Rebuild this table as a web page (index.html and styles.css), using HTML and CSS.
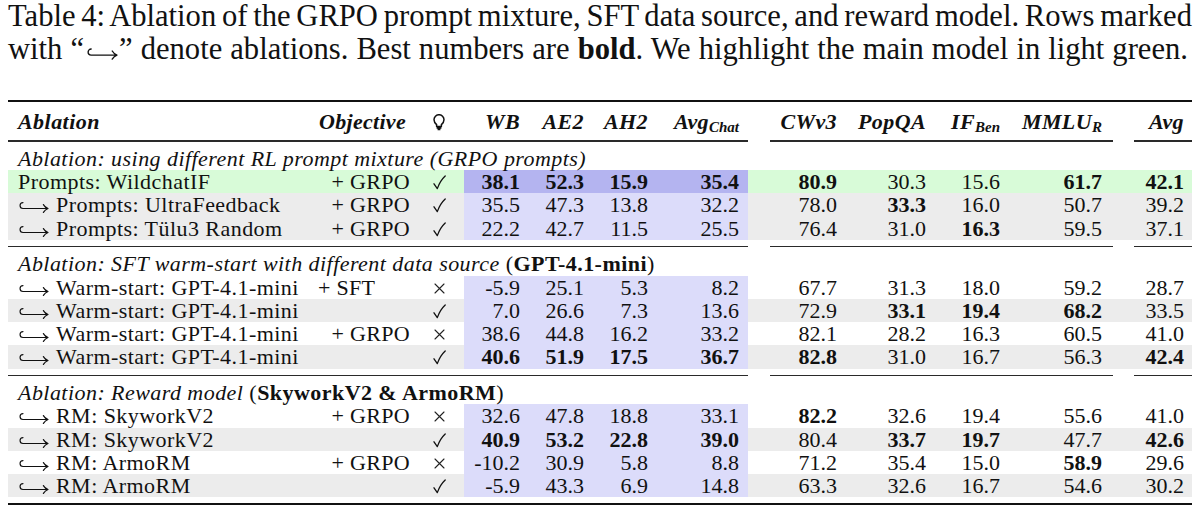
FILE: index.html
```html
<!DOCTYPE html>
<html lang="en">
<head>
<meta charset="utf-8">
<title>Table 4: Ablation</title>
<link rel="stylesheet" href="styles.css">
</head>
<body>
<div class="page">
  <p class="caption"><span class="cl1">Table 4: Ablation of the GRPO prompt mixture, SFT data source, and reward model. Rows marked</span><span class="cl2">with “<svg class="hook cap-hook" viewBox="0 0 31 13" aria-label="hookrightarrow"><path d="M5 2.6 A2.95 2.95 0 0 0 5 8.5 H29.6 M25.4 4.6 Q27 7.4 30 8.5 Q27 9.6 25.4 12.4"/></svg>” denote ablations. Best numbers are <b>bold</b>. We highlight the main model in light green.</span></p>

  <div class="tbl">
    <table>
      <colgroup>
        <col class="w1"><col class="w2"><col class="w3"><col class="w4"><col class="w5"><col class="w6"><col class="w7"><col class="w8"><col class="w9"><col class="w10"><col class="w11"><col class="w12">
      </colgroup>
      <thead>
        <tr class="head">
          <th class="c1">Ablation</th>
          <th class="c2">Objective</th>
          <th class="c3"><svg class="bulb" viewBox="0 0 12 17" aria-label="thinking"><path d="M3.6 10.6 C2.1 9.2 1 7.7 1 5.7 A5 5 0 0 1 11 5.7 C11 7.7 9.9 9.2 8.4 10.6 L8.4 12.4 L3.6 12.4 Z M3.6 14 H8.4 M4.6 15.6 H7.4"/></svg></th>
          <th class="c4">WB</th>
          <th class="c5">AE2</th>
          <th class="c6">AH2</th>
          <th class="c7">Avg<sub>Chat</sub></th>
          <th class="c8">CWv3</th>
          <th class="c9">PopQA</th>
          <th class="c10">IF<sub>Ben</sub></th>
          <th class="c11">MMLU<sub>R</sub></th>
          <th class="c12">Avg</th>
        </tr>
      </thead>
      <tbody>
        <tr class="rule"><td colspan="7"><div class="ln"></div></td><td colspan="4"><div class="ln l2"></div></td><td><div class="ln l3"></div></td></tr>

        <tr class="title"><td colspan="12"><i>Ablation: using different RL prompt mixture (GRPO prompts)</i></td></tr>
        <tr class="main">
          <td class="c1">Prompts: WildchatIF</td><td class="c2">+ GRPO</td><td class="c3"><svg class="chk" viewBox="0 0 13 15"><path d="M1 8.8 L4.3 13.6 Q7.2 5.6 12.2 1"/></svg></td>
          <td class="c4 b"><b>38.1</b></td><td class="c5 b"><b>52.3</b></td><td class="c6 b"><b>15.9</b></td><td class="c7 b"><b>35.4</b></td>
          <td class="c8"><b>80.9</b></td><td class="c9">30.3</td><td class="c10">15.6</td><td class="c11"><b>61.7</b></td><td class="c12"><b>42.1</b></td>
        </tr>
        <tr class="gray">
          <td class="c1"><svg class="hook" viewBox="0 0 31 13"><path d="M5 2.6 A2.95 2.95 0 0 0 5 8.5 H29.6 M25.4 4.6 Q27 7.4 30 8.5 Q27 9.6 25.4 12.4"/></svg>Prompts: UltraFeedback</td><td class="c2">+ GRPO</td><td class="c3"><svg class="chk" viewBox="0 0 13 15"><path d="M1 8.8 L4.3 13.6 Q7.2 5.6 12.2 1"/></svg></td>
          <td class="c4 b">35.5</td><td class="c5 b">47.3</td><td class="c6 b">13.8</td><td class="c7 b">32.2</td>
          <td class="c8">78.0</td><td class="c9"><b>33.3</b></td><td class="c10">16.0</td><td class="c11">50.7</td><td class="c12">39.2</td>
        </tr>
        <tr class="gray">
          <td class="c1"><svg class="hook" viewBox="0 0 31 13"><path d="M5 2.6 A2.95 2.95 0 0 0 5 8.5 H29.6 M25.4 4.6 Q27 7.4 30 8.5 Q27 9.6 25.4 12.4"/></svg>Prompts: Tülu3 Random</td><td class="c2">+ GRPO</td><td class="c3"><svg class="chk" viewBox="0 0 13 15"><path d="M1 8.8 L4.3 13.6 Q7.2 5.6 12.2 1"/></svg></td>
          <td class="c4 b">22.2</td><td class="c5 b">42.7</td><td class="c6 b">11.5</td><td class="c7 b">25.5</td>
          <td class="c8">76.4</td><td class="c9">31.0</td><td class="c10"><b>16.3</b></td><td class="c11">59.5</td><td class="c12">37.1</td>
        </tr>
        <tr class="sp"><td colspan="12"></td></tr>
        <tr class="rule"><td colspan="7"><div class="ln"></div></td><td colspan="4"><div class="ln l2"></div></td><td><div class="ln l3"></div></td></tr>

        <tr class="title"><td colspan="12"><i>Ablation: SFT warm-start with different data source</i> (<b>GPT-4.1-mini</b>)</td></tr>
        <tr>
          <td class="c1"><svg class="hook" viewBox="0 0 31 13"><path d="M5 2.6 A2.95 2.95 0 0 0 5 8.5 H29.6 M25.4 4.6 Q27 7.4 30 8.5 Q27 9.6 25.4 12.4"/></svg>Warm-start: GPT-4.1-mini</td><td class="c2 left">+ SFT</td><td class="c3"><svg class="cross" viewBox="0 0 11 11"><path d="M1 1 L10 10 M10 1 L1 10"/></svg></td>
          <td class="c4 b">-5.9</td><td class="c5 b">25.1</td><td class="c6 b">5.3</td><td class="c7 b">8.2</td>
          <td class="c8">67.7</td><td class="c9">31.3</td><td class="c10">18.0</td><td class="c11">59.2</td><td class="c12">28.7</td>
        </tr>
        <tr class="gray">
          <td class="c1"><svg class="hook" viewBox="0 0 31 13"><path d="M5 2.6 A2.95 2.95 0 0 0 5 8.5 H29.6 M25.4 4.6 Q27 7.4 30 8.5 Q27 9.6 25.4 12.4"/></svg>Warm-start: GPT-4.1-mini</td><td class="c2"></td><td class="c3"><svg class="chk" viewBox="0 0 13 15"><path d="M1 8.8 L4.3 13.6 Q7.2 5.6 12.2 1"/></svg></td>
          <td class="c4 b">7.0</td><td class="c5 b">26.6</td><td class="c6 b">7.3</td><td class="c7 b">13.6</td>
          <td class="c8">72.9</td><td class="c9"><b>33.1</b></td><td class="c10"><b>19.4</b></td><td class="c11"><b>68.2</b></td><td class="c12">33.5</td>
        </tr>
        <tr>
          <td class="c1"><svg class="hook" viewBox="0 0 31 13"><path d="M5 2.6 A2.95 2.95 0 0 0 5 8.5 H29.6 M25.4 4.6 Q27 7.4 30 8.5 Q27 9.6 25.4 12.4"/></svg>Warm-start: GPT-4.1-mini</td><td class="c2">+ GRPO</td><td class="c3"><svg class="cross" viewBox="0 0 11 11"><path d="M1 1 L10 10 M10 1 L1 10"/></svg></td>
          <td class="c4 b">38.6</td><td class="c5 b">44.8</td><td class="c6 b">16.2</td><td class="c7 b">33.2</td>
          <td class="c8">82.1</td><td class="c9">28.2</td><td class="c10">16.3</td><td class="c11">60.5</td><td class="c12">41.0</td>
        </tr>
        <tr class="gray">
          <td class="c1"><svg class="hook" viewBox="0 0 31 13"><path d="M5 2.6 A2.95 2.95 0 0 0 5 8.5 H29.6 M25.4 4.6 Q27 7.4 30 8.5 Q27 9.6 25.4 12.4"/></svg>Warm-start: GPT-4.1-mini</td><td class="c2"></td><td class="c3"><svg class="chk" viewBox="0 0 13 15"><path d="M1 8.8 L4.3 13.6 Q7.2 5.6 12.2 1"/></svg></td>
          <td class="c4 b"><b>40.6</b></td><td class="c5 b"><b>51.9</b></td><td class="c6 b"><b>17.5</b></td><td class="c7 b"><b>36.7</b></td>
          <td class="c8"><b>82.8</b></td><td class="c9">31.0</td><td class="c10">16.7</td><td class="c11">56.3</td><td class="c12"><b>42.4</b></td>
        </tr>
        <tr class="sp"><td colspan="12"></td></tr>
        <tr class="rule"><td colspan="7"><div class="ln"></div></td><td colspan="4"><div class="ln l2"></div></td><td><div class="ln l3"></div></td></tr>

        <tr class="title"><td colspan="12"><i>Ablation: Reward model</i> (<b>SkyworkV2 &amp; ArmoRM</b>)</td></tr>
        <tr>
          <td class="c1"><svg class="hook" viewBox="0 0 31 13"><path d="M5 2.6 A2.95 2.95 0 0 0 5 8.5 H29.6 M25.4 4.6 Q27 7.4 30 8.5 Q27 9.6 25.4 12.4"/></svg>RM: SkyworkV2</td><td class="c2">+ GRPO</td><td class="c3"><svg class="cross" viewBox="0 0 11 11"><path d="M1 1 L10 10 M10 1 L1 10"/></svg></td>
          <td class="c4 b">32.6</td><td class="c5 b">47.8</td><td class="c6 b">18.8</td><td class="c7 b">33.1</td>
          <td class="c8"><b>82.2</b></td><td class="c9">32.6</td><td class="c10">19.4</td><td class="c11">55.6</td><td class="c12">41.0</td>
        </tr>
        <tr class="gray">
          <td class="c1"><svg class="hook" viewBox="0 0 31 13"><path d="M5 2.6 A2.95 2.95 0 0 0 5 8.5 H29.6 M25.4 4.6 Q27 7.4 30 8.5 Q27 9.6 25.4 12.4"/></svg>RM: SkyworkV2</td><td class="c2"></td><td class="c3"><svg class="chk" viewBox="0 0 13 15"><path d="M1 8.8 L4.3 13.6 Q7.2 5.6 12.2 1"/></svg></td>
          <td class="c4 b"><b>40.9</b></td><td class="c5 b"><b>53.2</b></td><td class="c6 b"><b>22.8</b></td><td class="c7 b"><b>39.0</b></td>
          <td class="c8">80.4</td><td class="c9"><b>33.7</b></td><td class="c10"><b>19.7</b></td><td class="c11">47.7</td><td class="c12"><b>42.6</b></td>
        </tr>
        <tr>
          <td class="c1"><svg class="hook" viewBox="0 0 31 13"><path d="M5 2.6 A2.95 2.95 0 0 0 5 8.5 H29.6 M25.4 4.6 Q27 7.4 30 8.5 Q27 9.6 25.4 12.4"/></svg>RM: ArmoRM</td><td class="c2">+ GRPO</td><td class="c3"><svg class="cross" viewBox="0 0 11 11"><path d="M1 1 L10 10 M10 1 L1 10"/></svg></td>
          <td class="c4 b">-10.2</td><td class="c5 b">30.9</td><td class="c6 b">5.8</td><td class="c7 b">8.8</td>
          <td class="c8">71.2</td><td class="c9">35.4</td><td class="c10">15.0</td><td class="c11"><b>58.9</b></td><td class="c12">29.6</td>
        </tr>
        <tr class="gray">
          <td class="c1"><svg class="hook" viewBox="0 0 31 13"><path d="M5 2.6 A2.95 2.95 0 0 0 5 8.5 H29.6 M25.4 4.6 Q27 7.4 30 8.5 Q27 9.6 25.4 12.4"/></svg>RM: ArmoRM</td><td class="c2"></td><td class="c3"><svg class="chk" viewBox="0 0 13 15"><path d="M1 8.8 L4.3 13.6 Q7.2 5.6 12.2 1"/></svg></td>
          <td class="c4 b">-5.9</td><td class="c5 b">43.3</td><td class="c6 b">6.9</td><td class="c7 b">14.8</td>
          <td class="c8">63.3</td><td class="c9">32.6</td><td class="c10">16.7</td><td class="c11">54.6</td><td class="c12">30.2</td>
        </tr>
        <tr class="sp"><td colspan="12"></td></tr>
      </tbody>
    </table>
  </div>
</div>
</body>
</html>
```

FILE: styles.css
```css
html, body {
  margin: 0;
  padding: 0;
  background: #ffffff;
}

body {
  font-family: "Liberation Serif", "DejaVu Serif", serif;
  color: #111111;
}

.page {
  padding: 0 8px;
}

.caption {
  margin: 0;
  width: 1184px;
  font-family: "Liberation Serif", "DejaVu Serif", serif;
  font-size: 30.6px;
  line-height: 33px;
  white-space: nowrap;
}

.cl1 {
  display: block;
  word-spacing: -2px;
  text-align: justify;
  text-align-last: justify;
}

.cl2 {
  display: block;
  word-spacing: 0.4px;
}

.hook {
  display: inline-block;
  width: 31px;
  height: 13px;
  margin-right: 7px;
  vertical-align: -1px;
  fill: none;
  stroke: #111111;
  stroke-width: 1.15;
  stroke-linecap: round;
  stroke-linejoin: round;
}

.cap-hook {
  width: 32px;
  height: 14px;
  margin: 0 1px 0 2px;
  vertical-align: -1px;
  stroke-width: 1.3;
}

.tbl {
  margin-top: 34px;
  width: 1184px;
  border-top: 2.5px solid #111111;
  border-bottom: 2.5px solid #111111;
}

table {
  width: 1184px;
  table-layout: fixed;
  border-collapse: collapse;
  border-spacing: 0;
  font-family: "Liberation Serif", "DejaVu Serif", serif;
  font-size: 22px;
  color: #111111;
}

.w1 { width: 297px; }
.w2 { width: 115px; }
.w3 { width: 44px; }
.w4 { width: 63px; }
.w5 { width: 64px; }
.w6 { width: 64px; }
.w7 { width: 93px; }
.w8 { width: 97px; }
.w9 { width: 89px; }
.w10 { width: 74px; }
.w11 { width: 116px; }
.w12 { width: 68px; }

th, td {
  padding: 0;
  font-family: "Liberation Serif", "DejaVu Serif", serif;
  white-space: nowrap;
  line-height: 23.25px;
  height: 23.25px;
  text-align: right;
  vertical-align: middle;
}

th {
  font-weight: bold;
  font-style: italic;
  letter-spacing: 0.4px;
  padding-top: 8px;
  padding-bottom: 7px;
}

th sub {
  font-size: 15px;
  letter-spacing: 0;
  line-height: 0;
  vertical-align: -3px;
}

.bulb {
  width: 12px;
  height: 17px;
  vertical-align: -2px;
  fill: none;
  stroke: #111111;
  stroke-width: 1.5;
  stroke-linejoin: round;
}

.chk {
  width: 13px;
  height: 15px;
  vertical-align: -1px;
  fill: none;
  stroke: #111111;
  stroke-width: 1.3;
  stroke-linecap: round;
  stroke-linejoin: round;
}

.cross {
  width: 11px;
  height: 11px;
  vertical-align: 1px;
  fill: none;
  stroke: #222222;
  stroke-width: 1.1;
  stroke-linecap: round;
}

.c1 { text-align: left; padding-left: 10px; letter-spacing: 0.45px; }
.c2 { padding-right: 10px; letter-spacing: 0.3px; }
th.c2 { text-align: center; padding-right: 0; }
.c2.left { text-align: left; padding-left: 13px; padding-right: 0; }
.c3 { text-align: center; padding-right: 6px; }
.c4 { padding-right: 7px; }
.c5 { padding-right: 7px; }
.c6 { padding-right: 7px; }
.c7 { padding-right: 9px; }
.c8 { padding-right: 8px; }
.c9 { padding-right: 8px; }
.c10 { padding-right: 8px; }
.c11 { padding-right: 22px; }
.c12 { padding-right: 8px; }

tr.rule td {
  height: 1.5px;
  line-height: 0;
  padding: 0;
}

.ln {
  height: 1.5px;
  background: #2a2a2a;
}

.l2 { margin-left: 22px; margin-right: 11px; }
.l3 { margin-left: 10px; }

tr.title td {
  text-align: left;
  padding-left: 10px;
  padding-top: 5px;
  letter-spacing: 0.45px;
}

tr.sp td {
  height: 6px;
  line-height: 0;
  padding: 0;
}

tr.gray td { background: #ececec; }
tr.main td { background: #d8fbd8; }
tr td.b { background: #dcdcfa; }
tr.main td.b { background: #b4b4f0; }
```
